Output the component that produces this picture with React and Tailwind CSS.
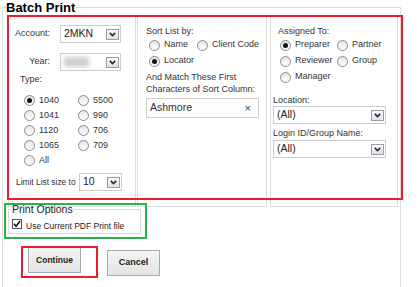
function Radio({ checked }) {
  return (
    <span className="flex h-[11px] w-[11px] shrink-0 items-center justify-center rounded-full border border-[#8a8a8a] bg-linear-to-b from-[#e6e6e6] to-white">
      {checked && <span className="h-[5px] w-[5px] rounded-full bg-[#111]" />}
    </span>
  );
}

function RadioItem({ label, checked, className = '' }) {
  return (
    <div className={`flex items-center gap-[4px] ${className}`}>
      <Radio checked={checked} />
      <span>{label}</span>
    </div>
  );
}

function DropButton() {
  return (
    <span className="flex h-[11px] w-[13px] shrink-0 items-center justify-center border border-[#9c9c9c] bg-linear-to-b from-[#fbfbfb] to-[#e2e2e2]">
      <svg width="7" height="5" viewBox="0 0 7 5">
        <path d="M0.8 0.9L3.5 3.6L6.2 0.9" fill="none" stroke="#1b2b52" strokeWidth="1.7" />
      </svg>
    </span>
  );
}

function Select({ value, className = '', children }) {
  return (
    <div className={`relative flex items-center justify-between border border-[#cdcdcd] bg-white pl-[3px] pr-[1px] text-[10.5px] text-[#222] ${className}`}>
      <span>{value}</span>
      {children}
      <DropButton />
    </div>
  );
}

function Panel({ className = '', children }) {
  return <div className={`flex flex-col border border-[#dcdcdc] ${className}`}>{children}</div>;
}

export default function App() {
  return (
    <div className="relative h-[287px] w-[417px] overflow-hidden bg-white font-['Liberation_Sans',Arial,sans-serif] text-[9px] text-[#333]">
      <fieldset className="ml-[2px] h-[300px] w-[399px] border border-[#dcdcdc] p-0">
        <legend className="ml-[3px] p-0 text-[13px] font-bold leading-[15px] text-black">Batch Print</legend>
        <div className="pl-[5px]">
          <div className="mt-[1px] flex h-[191px]">
            <Panel className="w-[128px]">
              <div className="mt-[8px] flex h-[18px] items-center">
                <span className="w-[41px] text-right">Account:</span>
                <Select className="ml-[10px] h-[18px] w-[61px]" value="2MKN" />
              </div>
              <div className="mt-[10px] flex h-[18px] items-center">
                <span className="w-[41px] text-right">Year:</span>
                <Select className="ml-[10px] h-[18px] w-[61px]" value="">
                  <span className="absolute left-[3px] top-[3px] h-[10px] w-[25px] bg-[#cfcfcf] blur-[2px]" />
                </Select>
              </div>
              <div className="mt-[3px] pl-[11px] leading-[11px]">Type:</div>
              <div className="mt-[8px] grid grid-cols-[54px_auto] pl-[15px]">
                <RadioItem className="h-[15px]" label="1040" checked />
                <RadioItem className="h-[15px]" label="5500" />
                <RadioItem className="h-[15px]" label="1041" />
                <RadioItem className="h-[15px]" label="990" />
                <RadioItem className="h-[15px]" label="1120" />
                <RadioItem className="h-[15px]" label="706" />
                <RadioItem className="h-[15px]" label="1065" />
                <RadioItem className="h-[15px]" label="709" />
                <RadioItem className="h-[15px]" label="All" />
              </div>
              <div className="mt-[5px] flex h-[18px] items-center pl-[7px]">
                <span className="w-[63px] whitespace-nowrap text-[8.4px]">Limit List size to</span>
                <Select className="h-[18px] w-[43px]" value="10" />
              </div>
            </Panel>

            <Panel className="ml-[1px] w-[130px]">
              <div className="mt-[9px] pl-[8px] leading-[11px]">Sort List by:</div>
              <div className="flex h-[16px] items-center pl-[11px]">
                <RadioItem className="w-[48px]" label="Name" />
                <RadioItem label="Client Code" />
              </div>
              <div className="flex h-[16px] items-center pl-[11px]">
                <RadioItem label="Locator" checked />
              </div>
              <div className="mt-[2px] pl-[8px] leading-[12px]">
                And Match These First
                <br />
                Characters of Sort Column:
              </div>
              <div className="ml-[8px] mt-[3px] flex h-[20px] w-[113px] items-center justify-between border border-[#d3d0c8] bg-[#fdfdfd] pl-[3px] pr-[7px]">
                <span className="text-[10.5px] text-[#333]">Ashmore</span>
                <span className="text-[11px] text-[#444]">×</span>
              </div>
            </Panel>

            <Panel className="ml-[3px] w-[128px]">
              <div className="mt-[9px] pl-[7px] leading-[11px]">Assigned To:</div>
              <div className="flex h-[16px] items-center pl-[9px]">
                <RadioItem className="w-[57px]" label="Preparer" checked />
                <RadioItem label="Partner" />
              </div>
              <div className="flex h-[16px] items-center pl-[9px]">
                <RadioItem className="w-[57px]" label="Reviewer" />
                <RadioItem label="Group" />
              </div>
              <div className="flex h-[16px] items-center pl-[9px]">
                <RadioItem label="Manager" />
              </div>
              <div className="mt-[10px] pl-[2px] leading-[11px]">Location:</div>
              <Select className="ml-[2px] h-[18px] w-[113px]" value="(All)" />
              <div className="mt-[4px] pl-[2px] leading-[11px]">Login ID/Group Name:</div>
              <Select className="ml-[2px] mt-[1px] h-[18px] w-[113px]" value="(All)" />
            </Panel>
          </div>

          <fieldset className="-mt-[4px] w-[133px] border border-[#dcdcdc] p-0 pb-[4px]">
            <legend className="ml-[3px] p-0 text-[10.5px] leading-[13px] text-[#222]">Print Options</legend>
            <div className="mt-[3px] flex items-center pl-[3px]">
              <span className="flex h-[10px] w-[10px] items-center justify-center border border-[#555] bg-white">
                <svg width="8" height="8" viewBox="0 0 8 8">
                  <path d="M1 3.8L3 6.2L7.2 1" fill="none" stroke="#111" strokeWidth="1.6" />
                </svg>
              </span>
              <span className="ml-[4px] translate-y-[2px] text-[8.5px] leading-[10px] text-[#222]">Use Current PDF Print file</span>
            </div>
          </fieldset>

          <div className="mt-[13px] flex items-start">
            <button type="button" className="ml-[20px] h-[26px] w-[53px] border border-[#a9a9a9] bg-linear-to-b from-[#f4f4f4] to-[#e4e4e4] text-[8.5px] font-bold text-[#222]">
              Continue
            </button>
            <button type="button" className="ml-[26px] mt-[3px] h-[26px] w-[53px] border border-[#a9a9a9] bg-linear-to-b from-[#f4f4f4] to-[#e4e4e4] text-[9px] font-bold text-[#222]">
              Cancel
            </button>
          </div>
        </div>
      </fieldset>

      <div className="pointer-events-none absolute left-[7px] top-[15px] h-[185px] w-[396px] border-2 border-[#ec1c2c]" />
      <div className="pointer-events-none absolute left-[4px] top-[203px] h-[36px] w-[143px] border-2 border-[#2bb24c]" />
      <div className="pointer-events-none absolute left-[21px] top-[246px] h-[32px] w-[77px] border-2 border-[#ec1c2c]" />
    </div>
  );
}
